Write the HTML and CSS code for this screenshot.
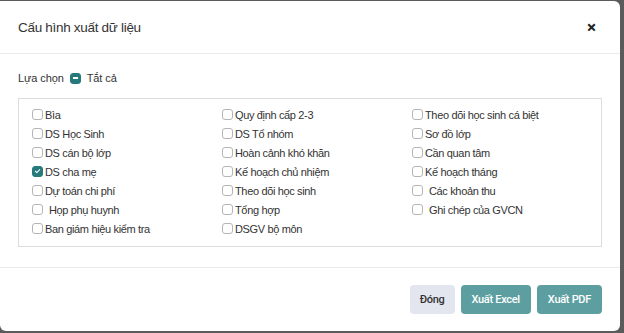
FILE: index.html
```html
<!DOCTYPE html>
<html lang="vi">
<head>
    <meta charset="UTF-8">
    <title>Cấu hình xuất dữ liệu</title>
    <link rel="stylesheet" href="styles.css">
</head>
<body>

<div class="modal">
    <div class="modal-header">
        <h2>Cấu hình xuất dữ liệu</h2>
        <span class="close">&times;</span>
    </div>

    <div class="modal-body">
        <div class="select-all">
            <span>Lựa chọn</span>
            <span class="box partial"></span>
            <span>Tắt cả</span>
        </div>

        <div class="options">
            <label class="option"><span class="box"></span>Bìa</label>
            <label class="option"><span class="box"></span>Quy định cấp 2-3</label>
            <label class="option"><span class="box"></span>Theo dõi học sinh cá biệt</label>

            <label class="option"><span class="box"></span>DS Học Sinh</label>
            <label class="option"><span class="box"></span>DS Tổ nhóm</label>
            <label class="option"><span class="box"></span>Sơ đồ lớp</label>

            <label class="option"><span class="box"></span>DS cán bộ lớp</label>
            <label class="option"><span class="box"></span>Hoàn cảnh khó khăn</label>
            <label class="option"><span class="box"></span>Cần quan tâm</label>

            <label class="option"><span class="box checked"></span>DS cha mẹ</label>
            <label class="option"><span class="box"></span>Kế hoạch chủ nhiệm</label>
            <label class="option"><span class="box"></span>Kế hoạch tháng</label>

            <label class="option"><span class="box"></span>Dự toán chi phí</label>
            <label class="option"><span class="box"></span>Theo dõi học sinh</label>
            <label class="option spaced"><span class="box"></span>Các khoản thu</label>

            <label class="option spaced"><span class="box"></span>Họp phụ huynh</label>
            <label class="option"><span class="box"></span>Tổng hợp</label>
            <label class="option spaced"><span class="box"></span>Ghi chép của GVCN</label>

            <label class="option"><span class="box"></span>Ban giám hiệu kiểm tra</label>
            <label class="option"><span class="box"></span>DSGV bộ môn</label>
        </div>
    </div>

    <div class="modal-footer">
        <button class="btn btn-light">Đóng</button>
        <button class="btn btn-teal">Xuất Excel</button>
        <button class="btn btn-teal">Xuất PDF</button>
    </div>
</div>

</body>
</html>
```

FILE: styles.css
```css
body {
    margin: 0;
    padding: 1px 0 0 0;
    background-color: #5b5b5b;
    font-family: "Liberation Sans", Arial, sans-serif;
    color: #333;
    height: 333px;
    overflow: hidden;
}

.modal {
    width: 620px;
    height: 330px;
    background-color: white;
    border-radius: 0 6px 6px 6px;
    display: flex;
    flex-direction: column;
}

.modal-header {
    height: 53px;
    box-sizing: border-box;
    padding: 0 24px 0 18px;
    display: flex;
    align-items: center;
    justify-content: space-between;
    border-bottom: 1px solid #e9ecef;
}

.modal-header h2 {
    margin: 0;
    font-size: 13.5px;
    font-weight: normal;
    letter-spacing: -0.3px;
    color: #333;
}

.close {
    font-family: Roboto, sans-serif;
    font-size: 17px;
    font-weight: bold;
    color: #222;
    line-height: 1;
}

.modal-body {
    padding: 16px 18px 20px 18px;
}

.select-all {
    display: flex;
    align-items: center;
    gap: 6px;
    height: 16px;
    font-size: 11px;
    letter-spacing: -0.1px;
    margin-bottom: 12px;
}

.options {
    border: 1px solid #dcdcdc;
    padding: 6px 13px 8px 13px;
    display: grid;
    grid-template-columns: 190px 190px 190px;
    grid-auto-rows: 19px;
}

.option {
    display: flex;
    align-items: center;
    gap: 2px;
    font-size: 11px;
    letter-spacing: -0.35px;
    color: #333;
}

.option.spaced {
    gap: 6px;
}

.box {
    width: 9px;
    height: 9px;
    border: 1px solid #b5b5b5;
    border-radius: 3px;
    flex-shrink: 0;
    position: relative;
}

.box.checked,
.box.partial {
    background-color: #267a7b;
    border-color: #267a7b;
}

.box.checked::after {
    content: "";
    position: absolute;
    left: 3px;
    top: 1px;
    width: 2px;
    height: 4px;
    border: solid white;
    border-width: 0 1.5px 1.5px 0;
    transform: rotate(45deg);
}

.box.partial::after {
    content: "";
    position: absolute;
    left: 2px;
    top: 3.5px;
    width: 5px;
    height: 2px;
    background: white;
}

.modal-footer {
    margin-top: auto;
    height: 64px;
    box-sizing: border-box;
    border-top: 1px solid #e9ecef;
    padding: 17px 18px 0 0;
    display: flex;
    justify-content: flex-end;
    align-items: flex-start;
    gap: 6px;
}

.btn {
    height: 29px;
    border: none;
    border-radius: 4px;
    font-family: Roboto, "Liberation Sans", sans-serif;
    font-size: 11px;
    font-weight: 500;
    letter-spacing: -0.3px;
    padding: 0 11px;
    cursor: pointer;
}

.btn-light {
    background-color: #e3e5ef;
    color: #333;
    padding: 0 10px;
}

.btn-teal {
    background-color: #5d9fa1;
    color: white;
}
```
